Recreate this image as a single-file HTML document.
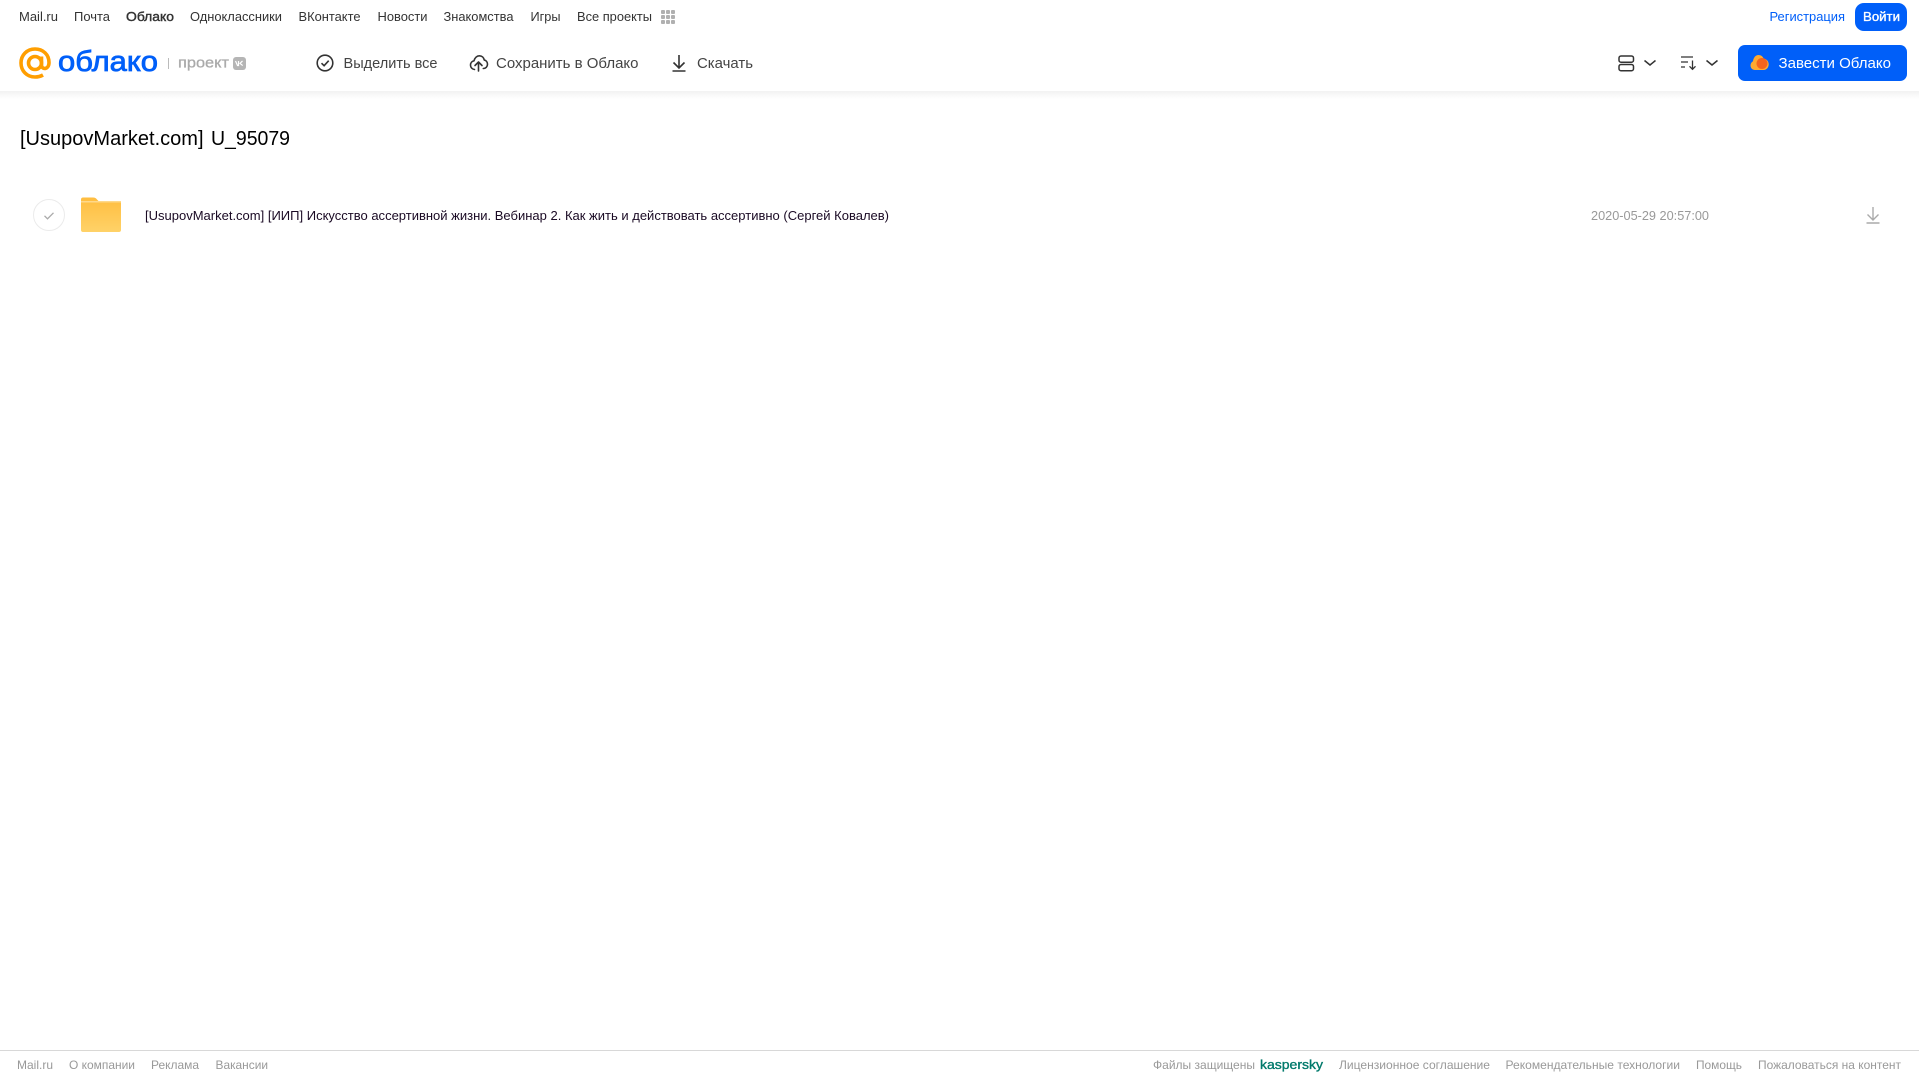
<!DOCTYPE html>
<html lang="ru">
<head>
<meta charset="utf-8">
<title>Облако</title>
<style>
html,body{margin:0;padding:0;background:#fff;width:1919px;height:1079px;overflow:hidden}
svg{position:absolute;left:0;top:0;display:block}
text{font-family:"Liberation Sans",sans-serif}
.n{font-size:13px;fill:#333}
.a{font-size:15px;fill:#444}
.f{font-size:12px;fill:#999}
</style>
</head>
<body>
<svg width="1919" height="1079" viewBox="0 0 1919 1079" xmlns="http://www.w3.org/2000/svg">
<defs>
<linearGradient id="sh" x1="0" y1="0" x2="0" y2="1"><stop offset="0" stop-color="#f2f2f2"/><stop offset="1" stop-color="#fff"/></linearGradient>
<linearGradient id="fo" x1="0" y1="0" x2="0" y2="1"><stop offset="0" stop-color="#ffbd3f"/><stop offset="1" stop-color="#ffd268"/></linearGradient>
</defs>
<rect width="1919" height="1079" fill="#fff"/>
<rect x="0" y="91" width="1919" height="8" fill="url(#sh)"/>

<!-- top nav -->
<text class="n" x="19" y="21" textLength="39" lengthAdjust="spacingAndGlyphs">Mail.ru</text>
<text class="n" x="74" y="21" textLength="36" lengthAdjust="spacingAndGlyphs">Почта</text>
<text class="n" x="126" y="21" textLength="48" lengthAdjust="spacingAndGlyphs" stroke="#333" stroke-width=".4">Облако</text>
<text class="n" x="190" y="21" textLength="92" lengthAdjust="spacingAndGlyphs">Одноклассники</text>
<text class="n" x="298.500" y="21" textLength="62" lengthAdjust="spacingAndGlyphs">ВКонтакте</text>
<text class="n" x="377.500" y="21" textLength="50" lengthAdjust="spacingAndGlyphs">Новости</text>
<text class="n" x="443.500" y="21" textLength="70" lengthAdjust="spacingAndGlyphs">Знакомства</text>
<text class="n" x="530.500" y="21" textLength="30" lengthAdjust="spacingAndGlyphs">Игры</text>
<text class="n" x="577" y="21" textLength="75" lengthAdjust="spacingAndGlyphs">Все проекты</text>
<g fill="#b0b0b0">
<rect x="661" y="10" width="4" height="4" rx="1"/><rect x="666" y="10" width="4" height="4" rx="1"/><rect x="671" y="10" width="4" height="4" rx="1"/>
<rect x="661" y="15" width="4" height="4" rx="1"/><rect x="666" y="15" width="4" height="4" rx="1"/><rect x="671" y="15" width="4" height="4" rx="1"/>
<rect x="661" y="20" width="4" height="4" rx="1"/><rect x="666" y="20" width="4" height="4" rx="1"/><rect x="671" y="20" width="4" height="4" rx="1"/>
</g>

<text x="1769.500" y="21" font-size="13" fill="#005ff9" textLength="75.500" lengthAdjust="spacingAndGlyphs">Регистрация</text>
<rect x="1855" y="3" width="52" height="28" rx="9" fill="#005ff9"/>
<text x="1863" y="21" font-size="13" fill="#fff" stroke="#fff" stroke-width=".35" textLength="37" lengthAdjust="spacingAndGlyphs">Войти</text>

<!-- logo -->
<g fill="none" stroke="#ff9e00" stroke-width="3.600">
<circle cx="35" cy="63" r="6.500"/>
<path d="M41.500 56.500V65c0 5 7.500 5 7.500-2.500C49 54.500 43 49 35 49s-14 6-14 14 6 14 14 14c3 0 5.500-.6 8-2"/>
</g>
<text x="58" y="71" font-size="29" fill="#005ff9" stroke="#005ff9" stroke-width=".8" textLength="100" lengthAdjust="spacingAndGlyphs">облако</text>
<rect x="168" y="58" width="1" height="11" fill="#bbb"/>
<text x="178" y="67.500" font-size="15" fill="#aaa" stroke="#aaa" stroke-width=".3" textLength="51" lengthAdjust="spacingAndGlyphs">проект</text>
<rect x="233" y="57" width="13" height="13" rx="3" fill="#b5b5b5"/>
<path d="M235.500 61l2 4.500h1V61M242.500 61l-2.500 2.300 2.700 2.300" fill="none" stroke="#fff" stroke-width="1.200"/>

<!-- actions -->
<g fill="none" stroke="#333" stroke-width="1.600">
<circle cx="325" cy="63" r="7.800"/>
<path d="M321.500 63.200l2.600 2.500 4.600-5"/>
</g>
<text class="a" x="343.500" y="68" textLength="94" lengthAdjust="spacingAndGlyphs">Выделить все</text>
<g fill="none" stroke="#333" stroke-width="1.600" stroke-linecap="round" stroke-linejoin="round">
<path d="M474.500 69.500c-2.500-.3-4-2.300-4-4.400 0-2.200 1.500-3.900 3.500-4.300.6-3 3-5 5.300-5 2.600 0 4.500 1.700 5 4.300 1.800.3 3.200 2 3.200 4.200 0 2.400-1.800 4.200-4.200 4.200"/>
<path d="M478.500 71V62.500M475 65.500l3.500-3.500 3.500 3.500"/>
</g>
<text class="a" x="496" y="68" textLength="142.500" lengthAdjust="spacingAndGlyphs">Сохранить в Облако</text>
<g fill="none" stroke="#333" stroke-width="1.600">
<path d="M679 55v13M673.500 62.500l5.500 5.500 5.500-5.500M672.500 71h13"/>
</g>
<text class="a" x="697" y="68" textLength="56" lengthAdjust="spacingAndGlyphs">Скачать</text>

<!-- right controls -->
<g fill="none" stroke="#333" stroke-width="1.500">
<rect x="1619" y="56" width="14.500" height="6.200" rx="2"/>
<rect x="1619" y="64.500" width="14.500" height="6.200" rx="2"/>
<path d="M1644.500 60.500l5.500 4.500 5.500-4.500M1706.500 60.500l5.500 4.500 5.500-4.500"/>
<path d="M1681 57h12M1681 62h7M1681 67h4" stroke-width="1.300"/>
<path d="M1692.500 60.500V69M1689.500 66.300l3 3 3-3" stroke-width="1.300"/>
</g>
<rect x="1738" y="45" width="169" height="36" rx="7" fill="#005ff9"/>
<path d="M1755 70c-2.500 0-4.500-2-4.500-4.500 0-2 1-3.500 2.500-4.300.5-3.500 2.500-6.200 5.500-6.200 2.500 0 4.500 1.500 5.200 3.800 3 .2 5 2.600 5 5.500s-2 5.700-5 5.700z" fill="#ffa930"/>
<circle cx="1762" cy="63.500" r="5.500" fill="#f4641e"/>
<text x="1778.500" y="68" font-size="15" fill="#fff" textLength="112.500" lengthAdjust="spacingAndGlyphs">Завести Облако</text>

<!-- title -->
<text x="20" y="145" font-size="20" fill="#000" textLength="183.500" lengthAdjust="spacingAndGlyphs">[UsupovMarket.com]</text>
<text x="211" y="145" font-size="20" fill="#000" textLength="79" lengthAdjust="spacingAndGlyphs">U_95079</text>

<!-- row -->
<circle cx="49" cy="215" r="15.500" fill="#fff" stroke="#ebebeb" stroke-width="1"/>
<path d="M44.500 215.800l3 3 6-6" fill="none" stroke="#aaa" stroke-width="1.300"/>
<path d="M83 197.500h10c2 0 3 .8 4 2l1.500 1.500H119c1.200 0 2 .8 2 2V230c0 1.200-.8 2-2 2H83c-1.200 0-2-.8-2-2V199.500c0-1.200.8-2 2-2z" fill="url(#fo)"/>
<rect x="81" y="201" width="40" height="1.500" fill="#ffd98a"/>
<text x="145" y="220" font-size="13" fill="#1a0a24" textLength="744" lengthAdjust="spacingAndGlyphs">[UsupovMarket.com] [ИИП] Искусство ассертивной жизни. Вебинар 2. Как жить и действовать ассертивно (Сергей Ковалев)</text>
<text x="1591" y="220" font-size="13" fill="#999" textLength="118" lengthAdjust="spacingAndGlyphs">2020-05-29 20:57:00</text>
<path d="M1873 207v13M1867.500 214.500l5.500 5.500 5.500-5.500M1866.500 223h13" fill="none" stroke="#aaa" stroke-width="1.400"/>

<!-- footer -->
<rect x="0" y="1050" width="1919" height="1" fill="#d8d8d8"/>
<text class="f" x="17" y="1069" textLength="36" lengthAdjust="spacingAndGlyphs">Mail.ru</text>
<text class="f" x="69" y="1069" textLength="66" lengthAdjust="spacingAndGlyphs">О компании</text>
<text class="f" x="151" y="1069" textLength="48" lengthAdjust="spacingAndGlyphs">Реклама</text>
<text class="f" x="215.500" y="1069" textLength="52.500" lengthAdjust="spacingAndGlyphs">Вакансии</text>
<text class="f" x="1153" y="1069" textLength="102" lengthAdjust="spacingAndGlyphs">Файлы защищены</text>
<text x="1260" y="1069" font-size="13" fill="#00796b" stroke="#00796b" stroke-width=".35" textLength="63" lengthAdjust="spacingAndGlyphs">kaspersky</text>
<text class="f" x="1339" y="1069" textLength="151" lengthAdjust="spacingAndGlyphs">Лицензионное соглашение</text>
<text class="f" x="1505.500" y="1069" textLength="174.500" lengthAdjust="spacingAndGlyphs">Рекомендательные технологии</text>
<text class="f" x="1696" y="1069" textLength="46" lengthAdjust="spacingAndGlyphs">Помощь</text>
<text class="f" x="1758" y="1069" textLength="143" lengthAdjust="spacingAndGlyphs">Пожаловаться на контент</text>
</svg>
</body>
</html>
